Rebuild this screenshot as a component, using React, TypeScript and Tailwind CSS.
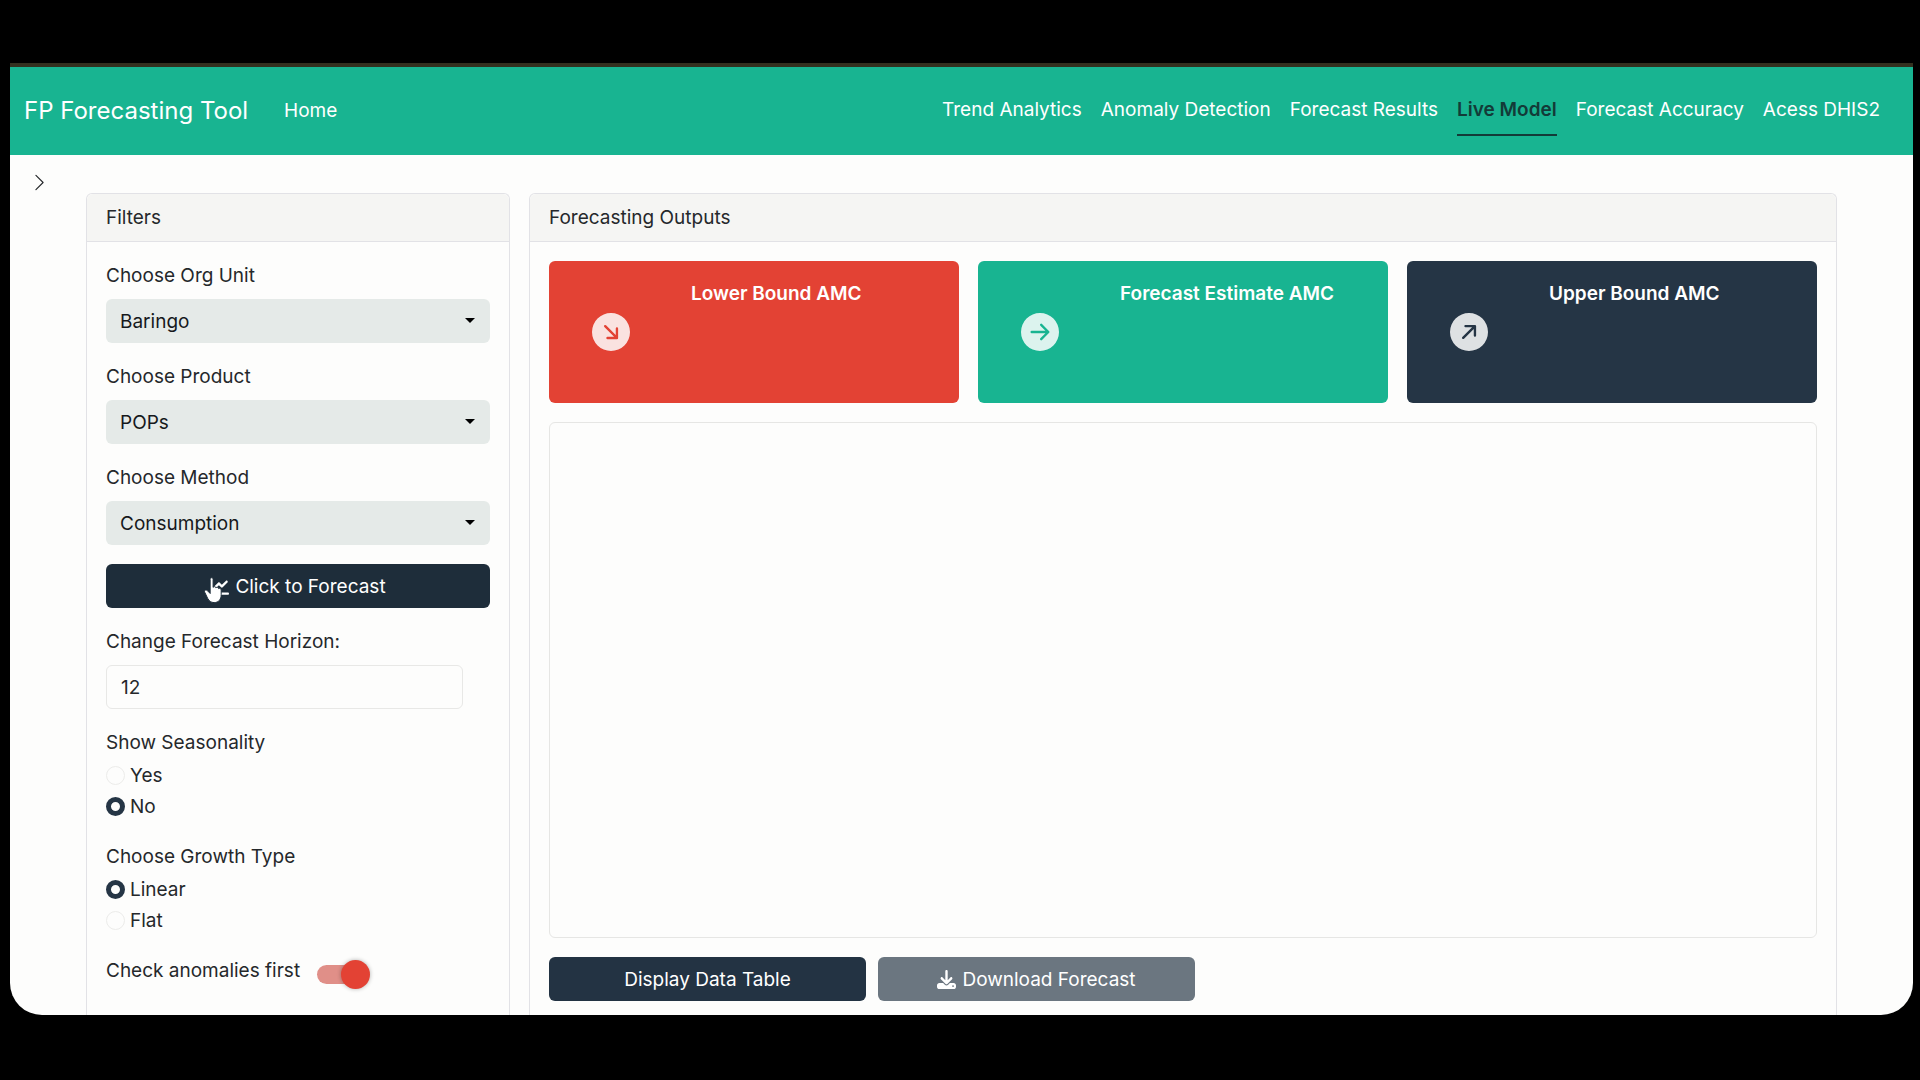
import React, { useId, useState } from "react";
import {
  BsArrowDownRightCircleFill,
  BsArrowRightCircleFill,
  BsArrowUpRightCircleFill,
  BsChevronRight,
} from "react-icons/bs";
import { FaChartLine, FaDownload } from "react-icons/fa6";

const NAV_LINKS = [
  "Trend Analytics",
  "Anomaly Detection",
  "Forecast Results",
  "Live Model",
  "Forecast Accuracy",
  "Acess DHIS2",
];

const VALUE_BOXES = [
  {
    title: "Lower Bound AMC",
    color: "bg-[#e34234]",
    icon: BsArrowDownRightCircleFill,
  },
  {
    title: "Forecast Estimate AMC",
    color: "bg-[#18b491]",
    icon: BsArrowRightCircleFill,
  },
  {
    title: "Upper Bound AMC",
    color: "bg-[#253545]",
    icon: BsArrowUpRightCircleFill,
  },
];

const Navbar: React.FC = () => {
  const active = "Live Model";

  return (
    <header className="flex shrink-0 items-center border-t-4 border-[#33301f] bg-[#18b491] pl-[14px] pr-[33px] text-white">
      <a href="#" className="text-2xl">
        FP Forecasting Tool
      </a>
      <nav className="flex flex-1 items-center justify-between pl-9">
        <a href="#home" className="pb-3 pt-[10px]">
          Home
        </a>
        <ul className="flex items-center gap-[19px] pb-[19px] pt-[18px]">
          {NAV_LINKS.map((link) => (
            <li key={link} className="flex">
              <a
                href="#"
                className={
                  link === active
                    ? "border-b-2 border-[#133b38] py-[10px] font-semibold text-[#133b38]"
                    : "border-b-2 border-transparent py-[10px]"
                }
              >
                {link}
              </a>
            </li>
          ))}
        </ul>
      </nav>
    </header>
  );
};

const Card: React.FC<{
  title: string;
  className?: string;
  children: React.ReactNode;
}> = ({ title, className = "", children }) => (
  <section
    className={`flex flex-col rounded-t-md border border-b-0 border-[#e2e2e6] ${className}`}
  >
    <h2 className="rounded-t-md border-b border-[#e2e2e6] bg-[#f5f5f3] px-[19px] py-[9px]">
      {title}
    </h2>
    <div className="flex flex-1 flex-col gap-[19px] p-[19px]">{children}</div>
  </section>
);

const SelectField: React.FC<{ label: string; value: string }> = ({
  label,
  value,
}) => {
  const id = useId();

  return (
    <div>
      <label htmlFor={id} className="mb-[9px] block">
        {label}
      </label>
      <div className="relative">
        <select
          id={id}
          defaultValue={value}
          className="block h-11 w-full appearance-none rounded-md bg-[#e5eae8] px-[14px] text-[#16191c]"
        >
          <option>{value}</option>
        </select>
        <svg
          className="pointer-events-none absolute right-[15px] top-[19px] h-[5px] w-[10px]"
          viewBox="0 0 10 5"
        >
          <path d="M0 0h10L5 5z" fill="#000" />
        </svg>
      </div>
    </div>
  );
};

const RadioField: React.FC<{
  label: string;
  options: string[];
  selected: string;
}> = ({ label, options, selected }) => {
  const name = useId();
  const [value, setValue] = useState(selected);

  return (
    <fieldset>
      <legend className="mb-1">{label}</legend>
      <div className="flex flex-col gap-0.5 pb-0.5">
        {options.map((option) => (
          <label key={option} className="flex items-center gap-[5px]">
            <input
              type="radio"
              name={name}
              value={option}
              checked={value === option}
              onChange={() => setValue(option)}
              className="size-[19px] appearance-none rounded-full border border-[#ececea] checked:border-[5px] checked:border-[#253545]"
            />
            {option}
          </label>
        ))}
      </div>
    </fieldset>
  );
};

// Hand pointer resting on the forecast button
const Pointer: React.FC = () => (
  <svg
    className="pointer-events-none absolute left-[97px] top-3 h-[30px] w-[24px]"
    viewBox="0 0 24 30"
  >
    <path
      d="M7.200 3.400c0-2.200 2.900-2.200 2.900 0v8c.6-1.200 2.700-1 2.800.4.800-.9 2.500-.5 2.700.8 1-.7 2.600 0 2.600 1.500v4.600c0 4.700-2.700 7.900-7 7.900-3.300 0-5.100-1.600-6.500-4.200L1.700 16.200c-.9-1.800 1.300-3.100 2.600-1.600l2.900 2.900z"
      fill="#fff"
      stroke="#1e2d3a"
      strokeWidth="1"
    />
  </svg>
);

const Filters: React.FC = () => (
  <Card title="Filters" className="w-[424px] shrink-0">
    <SelectField label="Choose Org Unit" value="Baringo" />
    <SelectField label="Choose Product" value="POPs" />
    <SelectField label="Choose Method" value="Consumption" />

    <div className="relative">
      <button
        type="button"
        className="flex h-11 w-full items-center justify-center gap-[6px] rounded-md bg-[#1e2d3a] text-white"
      >
        <FaChartLine />
        Click to Forecast
      </button>
      <Pointer />
    </div>

    <div>
      <label htmlFor="horizon" className="mb-[9px] block">
        Change Forecast Horizon:
      </label>
      <input
        id="horizon"
        type="text"
        inputMode="numeric"
        defaultValue="12"
        className="block h-11 w-[357px] rounded-md border border-[#e8e8e6] px-[14px]"
      />
    </div>

    <RadioField
      label="Show Seasonality"
      options={["Yes", "No"]}
      selected="No"
    />
    <RadioField
      label="Choose Growth Type"
      options={["Linear", "Flat"]}
      selected="Linear"
    />

    <div className="flex items-center gap-[17px]">
      <label htmlFor="anomalies">Check anomalies first</label>
      <input
        id="anomalies"
        type="checkbox"
        defaultChecked
        className="relative mt-2 h-[19px] w-12 appearance-none rounded-full bg-[#cfcfcf] before:absolute before:-top-[5px] before:left-0 before:size-[29px] before:rounded-full before:bg-white before:shadow-[0_0_4px_rgba(0,0,0,0.3)] checked:bg-[#e08f88] checked:before:left-6 checked:before:bg-[#e34234]"
      />
    </div>
  </Card>
);

const Outputs: React.FC = () => (
  <Card title="Forecasting Outputs" className="min-w-0 flex-1">
    <div className="grid grid-cols-3 gap-[19px]">
      {VALUE_BOXES.map(({ title, color, icon: Icon }) => (
        <div
          key={title}
          className={`flex h-[142px] rounded-md text-white ${color}`}
        >
          <div className="flex w-[123px] items-center justify-center">
            <Icon className="size-[38px] opacity-85" />
          </div>
          <h3 className="flex-1 px-[19px] py-[18px] font-semibold">{title}</h3>
        </div>
      ))}
    </div>

    <div className="h-[516px] shrink-0 rounded-md border border-[#e6e6e4]" />

    <div className="flex gap-3">
      <button
        type="button"
        className="h-11 w-1/4 rounded-md bg-[#233343] text-white"
      >
        Display Data Table
      </button>
      <button
        type="button"
        className="flex h-11 w-1/4 items-center justify-center gap-[6px] rounded-md bg-[#6b7680] text-white"
      >
        <FaDownload />
        Download Forecast
      </button>
    </div>
  </Card>
);

export default function App() {
  return (
    <div className="flex h-screen flex-col bg-black pb-[65px] pl-[10px] pr-[7px] pt-[63px] font-['Inter',sans-serif] text-[19px] leading-[29px] text-[#25282b]">
      <div className="flex min-h-0 flex-1 flex-col overflow-hidden rounded-b-[32px] bg-[#fdfdfc]">
        <Navbar />
        <div className="flex flex-1">
          <aside className="w-[76px] shrink-0 pl-5 pt-[18px]">
            <button type="button" aria-label="Open sidebar" className="block">
              <BsChevronRight className="size-[19px]" />
            </button>
          </aside>
          <main className="flex min-w-0 flex-1 gap-[19px] pr-[76px] pt-[38px]">
            <Filters />
            <Outputs />
          </main>
        </div>
      </div>
    </div>
  );
}
